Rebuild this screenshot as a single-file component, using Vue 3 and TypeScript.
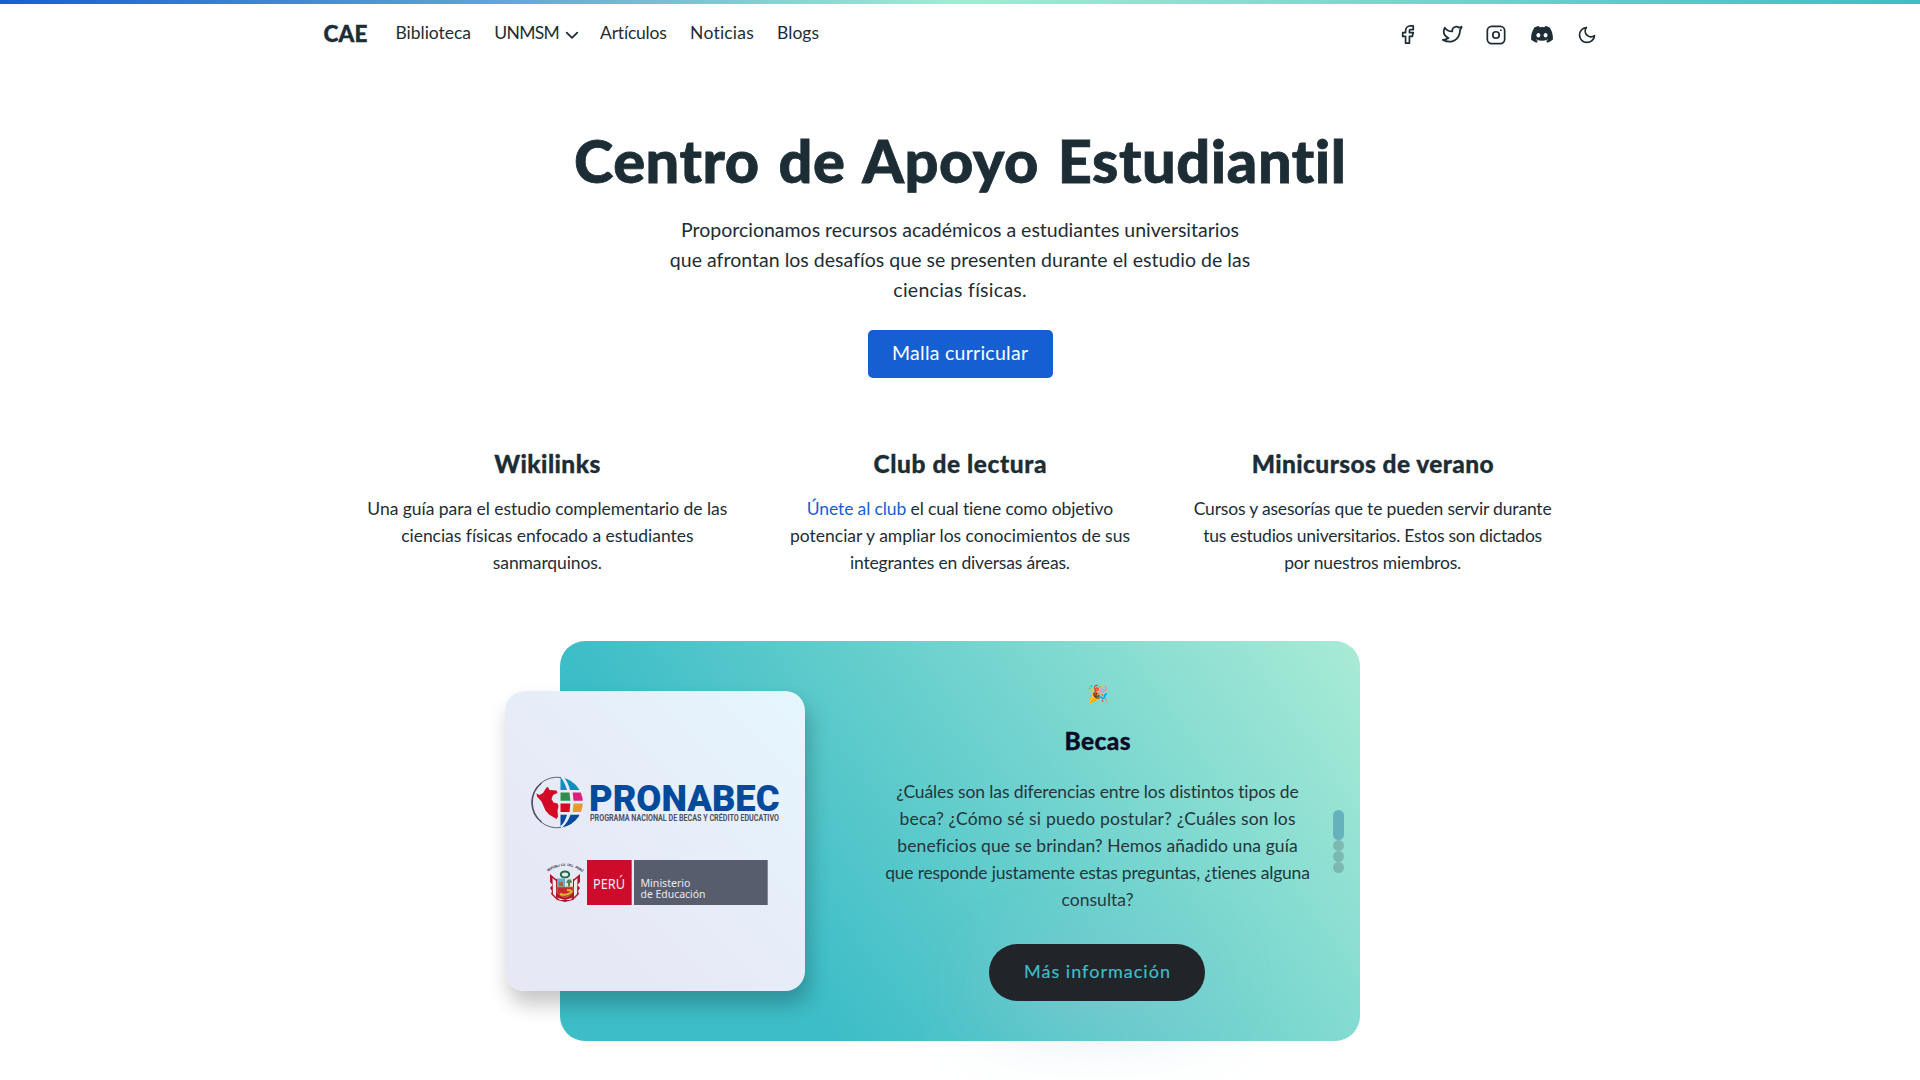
<script setup lang="ts">
import type { Directive } from 'vue'

interface Line { text: string; width: number; link?: string }
interface Feature { title: string; titleWidth: number; lines: Line[] }

// Tracks a line of text out (or in) until it fills the given measure.
const vFit: Directive<HTMLElement, number> = {
  mounted(el, { value }) {
    const range = document.createRange()
    range.selectNodeContents(el)
    const natural = range.getBoundingClientRect().width
    const count = (el.textContent ?? '').trim().length
    const spacing = (value - natural) / (count - 1)
    el.style.letterSpacing = `${spacing}px`
    el.style.marginRight = `${-spacing}px`
  },
}

const lead: Line[] = [
  { text: 'Proporcionamos recursos académicos a estudiantes universitarios', width: 558 },
  { text: 'que afrontan los desafíos que se presenten durante el estudio de las', width: 580 },
  { text: 'ciencias físicas.', width: 133 },
]

const features: Feature[] = [
  {
    title: 'Wikilinks', titleWidth: 106,
    lines: [
      { text: 'Una guía para el estudio complementario de las', width: 360 },
      { text: 'ciencias físicas enfocado a estudiantes', width: 292 },
      { text: 'sanmarquinos.', width: 109 },
    ],
  },
  {
    title: 'Club de lectura', titleWidth: 173,
    lines: [
      { link: 'Únete al club', text: ' el cual tiene como objetivo', width: 307 },
      { text: 'potenciar y ampliar los conocimientos de sus', width: 340 },
      { text: 'integrantes en diversas áreas.', width: 220 },
    ],
  },
  {
    title: 'Minicursos de verano', titleWidth: 242,
    lines: [
      { text: 'Cursos y asesorías que te pueden servir durante', width: 358 },
      { text: 'tus estudios universitarios. Estos son dictados', width: 339 },
      { text: 'por nuestros miembros.', width: 177 },
    ],
  },
]

const slide: Line[] = [
  { text: '¿Cuáles son las diferencias entre los distintos tipos de', width: 403 },
  { text: 'beca? ¿Cómo sé si puedo postular? ¿Cuáles son los', width: 396 },
  { text: 'beneficios que se brindan? Hemos añadido una guía', width: 400 },
  { text: 'que responde justamente estas preguntas, ¿tienes alguna', width: 425 },
  { text: 'consulta?', width: 72 },
]

// The legend over the coat of arms, letter by letter along an arc.
const legend = 'REPÚBLICA DEL PERÚ'
const angles = [...legend].map((_, i) => -40 + (76 * i) / (legend.length - 1))
const legendX = angles.map(a => (60 + 26 * Math.sin((a * Math.PI) / 180)).toFixed(2)).join(' ')
const legendY = angles.map(a => (200 - 25 * Math.cos((a * Math.PI) / 180)).toFixed(2)).join(' ')
const legendRotate = angles.map(a => a.toFixed(1)).join(' ')
</script>

<template>
  <div class="page">
    <div class="topbar"></div>
    <header class="header">
      <a class="brand"><span v-fit="44">CAE</span></a>
      <nav class="nav">
        <a class="item"><span v-fit="75.5">Biblioteca</span></a>
        <a class="item drop">
          <span v-fit="65.5">UNMSM</span>
          <svg width="14" height="14" viewBox="0 0 14 14"><path d="M1.7 4.6 7 9.9l5.3-5.3" /></svg>
        </a>
        <a class="item"><span v-fit="67">Artículos</span></a>
        <a class="item"><span v-fit="64">Noticias</span></a>
        <a class="item"><span v-fit="42">Blogs</span></a>
      </nav>
      <div class="social">
        <svg class="fb" width="24" height="24" viewBox="0 0 24 24"><path d="M7 10v4h3v7h4v-7h3l1-4h-4V8a1 1 0 0 1 1-1h3V3h-3a5 5 0 0 0-5 5v2H7" /></svg>
        <svg class="tw" width="24" height="24" viewBox="0 0 24 24"><path d="M22 4.01c-1 .49-1.98.689-3 .99-1.121-1.265-2.783-1.335-4.38-.737S11.977 6.323 12 8v1c-3.245.083-6.135-1.395-8-4 0 0-4.182 7.433 4 11-1.872 1.247-3.739 2.088-6 2 3.308 1.803 6.913 2.423 10.034 1.517 3.58-1.04 6.522-3.723 7.651-7.742a13.84 13.84 0 0 0 .497-3.753C20.18 7.773 21.692 5.25 22 4.009z" /></svg>
        <svg class="ig" width="26" height="26" viewBox="0 0 24 24"><rect x="4" y="4" width="16" height="16" rx="4" /><circle cx="12" cy="12" r="3" /><path d="M16.5 7.5v.001" /></svg>
        <svg class="dc" width="22" height="17" viewBox="0 0 22 17"><path d="M18.6 1.5A18 18 0 0 0 14.1.1l-.6 1.2a17 17 0 0 0-5 0L7.9.1a18 18 0 0 0-4.5 1.4C.6 5.7-.2 9.8.2 13.8a18 18 0 0 0 5.5 2.9l1.2-1.9-1.9-.9.5-.4c3.6 1.7 7.5 1.7 11 0l.5.4-1.9.9 1.2 1.9a18 18 0 0 0 5.5-2.9c.5-4.7-.8-8.7-3.2-12.3zM7.4 11.4c-1.1 0-2-1-2-2.2s.9-2.2 2-2.2 2 1 2 2.2-.9 2.2-2 2.2zm7.2 0c-1.1 0-2-1-2-2.2s.9-2.2 2-2.2 2 1 2 2.2-.9 2.2-2 2.2z" /></svg>
        <svg class="moon" width="20" height="20" viewBox="0 0 24 24"><path d="M21 12.79A9 9 0 1 1 11.21 3 7 7 0 0 0 21 12.79z" /></svg>
      </div>
    </header>

    <main>
      <section class="hero">
        <h1><span v-fit="773">Centro de Apoyo Estudiantil</span></h1>
        <p class="lead">
          <span v-for="l in lead" :key="l.text" class="line"><span v-fit="l.width">{{ l.text }}</span></span>
        </p>
        <a class="btn"><span v-fit="136">Malla curricular</span></a>
      </section>

      <section class="features">
        <article v-for="f in features" :key="f.title" class="feature">
          <h2><span v-fit="f.titleWidth">{{ f.title }}</span></h2>
          <p>
            <span v-for="l in f.lines" :key="l.text" class="line"><span v-fit="l.width"><a v-if="l.link">{{ l.link }}</a>{{ l.text }}</span></span>
          </p>
        </article>
      </section>

      <section class="slider">
        <div class="media">
          <svg class="logo" width="300" height="300" viewBox="0 0 300 300">
            <clipPath id="globe"><circle cx="52.3" cy="111.5" r="25.5" /></clipPath>
            <g clip-path="url(#globe)">
              <path fill="#0b8fbd" d="M55.5 86v13h6.5C60.5 94 58.5 89.5 55.5 86z" />
              <path fill="#0b8fbd" d="M57 84c4 4 6.8 9.5 8 15H78V84z" />
              <path fill="#2f8e4b" d="M55.5 101.5h9l.8 8.3h-9.8z" />
              <path fill="#dc1f7c" d="M67.7 101.5H78v8.3h-9.5z" />
              <path fill="#d30a26" d="M55.5 112.6h9.8l-.8 8.3h-9z" />
              <path fill="#e39a2f" d="M68.5 112.6H78v8.3H67.7z" />
              <path fill="#034a9b" d="M55.5 123.8H62c-1.500 5-3.500 9-6.500 11.500z" />
              <path fill="#034a9b" d="M65.5 123.8H78v14H56c4.500-4 7.800-8.800 9.500-14z" />
            </g>
            <path fill="none" stroke="#4d5161" stroke-width=".9" d="M56 86.500a25.300 25.300 0 1 0 0 50" />
            <path fill="none" stroke="#4d5161" stroke-width="1.5" d="M36.500 92a25 25 0 0 0 0 39" />
            <path fill="#d30a26" d="m31.500 102.500 3 1.500 3.500-2 3.500-5.500 1.500-.5 1.500 3 7 .5 1 2.500-4.500 2-1.500 4 2 3.500 4 1 1 2.500-1 4.500.5 6-1.500 2.500-7.500-4.500-3.500-4-4-9-4.500-5z" />
            <text x="84" y="120" textLength="190.5" lengthAdjust="spacingAndGlyphs" font-family="Roboto" font-weight="900" font-size="37" fill="#034a9b">PRONABEC</text>
            <text x="85" y="130" textLength="189" lengthAdjust="spacingAndGlyphs" font-family="Roboto" font-weight="700" font-size="8.3" fill="#4d5161">PROGRAMA NACIONAL DE BECAS Y CRÉDITO EDUCATIVO</text>

            <g>
              <text :x="legendX" :y="legendY" :rotate="legendRotate" font-family="Liberation Sans" font-weight="700" font-size="3.5" fill="#333743">{{ legend }}</text>
              <path fill="#b5122b" d="M45 183l6 5h18l6-5v8l-2.500 3 2.500 3-2 3 1 3-6 6-8 2-8-2-6-6 1-3-2-3 2.500-3-2.500-3z" />
              <path fill="#ececf2" d="M47.500 187l3.500 3v16l-3-3zM72.500 187l-3.500 3v16l3-3z" />
              <ellipse cx="60" cy="183.5" rx="4.2" ry="3" fill="#e7e7f5" stroke="#216b49" stroke-width="2" />
              <path fill="#63aeca" d="M52 187.500h8v8.500h-8z" />
              <path fill="#dce6dc" d="M60 187.500h8v8.500h-8z" />
              <path fill="#4b8652" d="M63 188.500h3l1 3-2 .5v3.500h-2V192l-2-.5z" />
              <path fill="#9e6945" d="M54 191h4v4h-4z" />
              <path fill="#c72832" stroke="#b38a37" stroke-width=".8" d="M52 196h16v5q-2 4-8 5.500-6-1.500-8-5.500z" />
              <path fill="none" stroke="#e2b530" stroke-width="2" d="M55 203q6 2 10-1t-3-3" />
              <path fill="#ececf2" d="M52 206.500l8 2.500 8-2.500-3 2.500h-10z" />
            </g>

            <path fill="#cf0b2b" d="M82 169h44.700v45H82z" />
            <path fill="#575d6d" d="M129 169h133.700v45H129z" />
            <g font-family="Noto Sans" fill="#e9e9f3">
              <text x="88" y="198" textLength="32" lengthAdjust="spacingAndGlyphs" font-size="14">PERÚ</text>
              <text x="135.5" y="196" textLength="50" lengthAdjust="spacingAndGlyphs" font-size="10.5">Ministerio</text>
              <text x="135.5" y="207" textLength="65" lengthAdjust="spacingAndGlyphs" font-size="10.5">de Educación</text>
            </g>
          </svg>
        </div>
        <div class="content">
          <span class="emoji">🎉</span>
          <h3><span v-fit="66">Becas</span></h3>
          <p>
            <span v-for="l in slide" :key="l.text" class="line"><span v-fit="l.width">{{ l.text }}</span></span>
          </p>
          <a class="more"><span v-fit="146">Más información</span></a>
        </div>
        <div class="bullets"><i class="on"></i><i></i><i></i><i></i></div>
      </section>
    </main>
  </div>
</template>

<style>
body { margin: 0; background: #fff; overflow: hidden; }
</style>

<style scoped>
.page {
  height: 1080px;
  overflow: hidden;
  color: #1d2d35;
  font-family: Lato, "Open Sans", sans-serif;
  font-size: 17.5px;
}
h1, h2, h3, p { margin: 0; }
.line { display: block; white-space: nowrap; }
.line > span, h1 > span, h2 > span, h3 > span { display: inline-block; white-space: pre; }
.topbar {
  height: 4px;
  background: linear-gradient(90deg, #155fd3, #a5ead3 50%, #3ebdc7);
}
.header {
  box-sizing: border-box;
  width: 1273px;
  height: 62px;
  margin: 0 auto;
  display: flex;
  align-items: flex-start;
}
.header svg { fill: none; stroke: currentColor; stroke-width: 2; stroke-linecap: round; stroke-linejoin: round; }
.brand { width: 72px; font-size: 22.5px; font-weight: 900; line-height: 30px; padding-top: 15px; -webkit-text-stroke: .4px; }
.nav { display: flex; gap: 23.3px; line-height: 30px; padding-top: 14px; white-space: nowrap; }
.item > span { display: inline-block; }
.drop { display: flex; align-items: center; margin-right: -2px; }
.drop svg { margin: 4px 0 0 5px; stroke-width: 1.8; }
.social { display: flex; align-items: center; margin-left: auto; height: 24px; margin-top: 18.5px; }
.social .fb { width: 23px; height: 23px; margin-right: 21.5px; stroke-width: 1.8; }
.social .tw { width: 22.5px; height: 22.5px; margin-right: 19.5px; stroke-width: 1.9; }
.social .ig { margin-right: 22px; stroke-width: 1.6; }
.social .dc { fill: currentColor; stroke: none; margin-right: 24px; }
.social .moon { stroke-width: 2.1; }
.hero { display: flex; flex-direction: column; align-items: center; text-align: center; }
h1 { font-size: 59.5px; font-weight: 900; line-height: 72px; margin-top: 58px; word-spacing: 4px; -webkit-text-stroke: .8px; }
.lead { font-size: 19.5px; line-height: 30px; margin-top: 19px; }
.btn {
  margin-top: 25px;
  width: 185px;
  height: 48px;
  border-radius: 5px;
  background: #155fd3;
  color: #fff;
  font-size: 19.5px;
  line-height: 46px;
}
.btn > span, .more > span { display: inline-block; }
.features { display: flex; width: 1238px; margin: 68px auto 0; }
.feature { flex: 1; text-align: center; }
h2 { font-size: 24.5px; font-weight: 900; line-height: 36px; -webkit-text-stroke: .3px; }
.feature p { line-height: 27px; margin-top: 13px; }
.feature p a { color: #155fd3; }
.slider {
  box-sizing: border-box;
  position: relative;
  width: 800px;
  height: 400px;
  margin: 65px auto 0;
  border-radius: 25px;
  display: flex;
  align-items: center;
  background: linear-gradient(235deg, #a9ebd6 0%, #3dbdc7 74%);
}
.media {
  width: 300px;
  height: 300px;
  margin-left: -55px;
  flex: none;
  border-radius: 20px;
  overflow: hidden;
  background: linear-gradient(225deg, #e5f6fe 0%, #e7e8f5 74%);
  box-shadow: 4px 13px 20px 1px rgba(0, 0, 0, .22);
}
.logo { display: block; }
.content {
  width: 424px;
  margin-left: 80.5px;
  display: flex;
  flex-direction: column;
  align-items: center;
  text-align: center;
  white-space: nowrap;
}
.emoji { font-family: "Noto Color Emoji", sans-serif; font-size: 17.5px; line-height: 27px; height: 27px; margin-left: 2px; }
h3 { font-size: 24.5px; font-weight: 900; line-height: 36px; color: #0d0925; margin-top: 15px; -webkit-text-stroke: .3px; }
.content p { line-height: 27px; margin-top: 18.5px; color: #24363b; }
.more {
  width: 216px;
  height: 57px;
  margin: 31px 1px 0 0;
  border-radius: 29px;
  background: #212429;
  color: #3dbdc7;
  font-size: 18px;
  line-height: 55px;
  box-shadow: 0 14px 80px rgba(150, 190, 210, .45);
  -webkit-text-stroke: .2px;
}
.bullets { position: absolute; left: 772.5px; top: 168.5px; width: 11px; display: flex; flex-direction: column; }
.bullets i { width: 11px; height: 11px; border-radius: 11px; background: #46505a; opacity: .28; }
.bullets .on { height: 30px; background: #1d6a9c; opacity: .4; }
</style>
